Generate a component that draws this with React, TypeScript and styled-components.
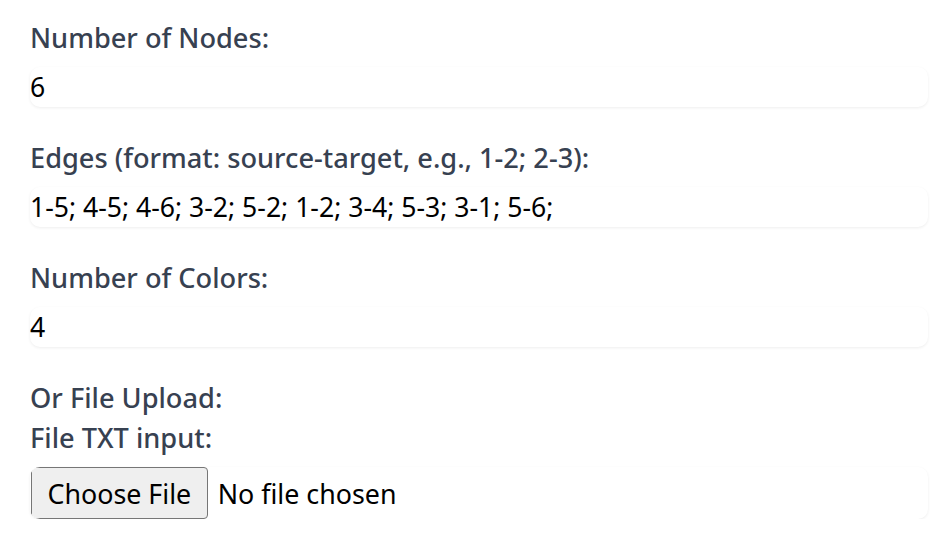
import React from "react";
import styled, { createGlobalStyle } from "styled-components";

const Global = createGlobalStyle`
  html, body { margin: 0; padding: 0; background: #ffffff; }
  body { font-family: "Noto Sans", "Open Sans", sans-serif; }
`;

const Form = styled.form`
  display: flex;
  flex-direction: column;
  padding: 20px 20px 0 30px;
`;

const Group = styled.div<{ $gap?: number }>`
  display: flex;
  flex-direction: column;
  margin-bottom: ${(p) => p.$gap ?? 33}px;
`;

const Label = styled.label<{ $mb?: number }>`
  display: block;
  font-family: "Noto Sans", sans-serif;
  font-weight: 500;
  font-size: 27.2px;
  line-height: 36px;
  color: #374151;
  margin-bottom: ${(p) => p.$mb ?? 11}px;
`;

const TextInput = styled.input`
  box-sizing: border-box;
  width: 100%;
  height: 40px;
  border: none;
  outline: none;
  border-radius: 10px;
  background: #ffffff;
  box-shadow: 0 1px 3px rgba(0, 0, 0, 0.07);
  padding: 0;
  font-family: "Noto Sans", sans-serif;
  font-size: 26.6px;
  color: #000;
`;

const FileInput = styled.input`
  box-sizing: border-box;
  width: 100%;
  height: 52px;
  border-radius: 10px;
  background: #ffffff;
  box-shadow: 0 1px 3px rgba(0, 0, 0, 0.07);
  font-family: "Noto Sans", sans-serif;
  font-size: 26.8px;
  color: #000;
  padding: 0 0 0 1px;

  &::file-selector-button {
    height: 52px;
    font-family: "Noto Sans", sans-serif;
    font-size: 26.8px;
    color: #000;
    background: #efefef;
    border: 1px solid #767676;
    border-radius: 4px;
    padding: 0 15.5px;
    margin-right: 10px;
  }
`;

export default function App() {
  return (
    <>
      <Global />
      <Form onSubmit={(e) => e.preventDefault()}>
        <Group>
          <Label htmlFor="nodes">Number of Nodes:</Label>
          <TextInput id="nodes" defaultValue="6" />
        </Group>
        <Group>
          <Label htmlFor="edges">Edges (format: source-target, e.g., 1-2; 2-3):</Label>
          <TextInput id="edges" defaultValue="1-5; 4-5; 4-6; 3-2; 5-2; 1-2; 3-4; 5-3; 3-1; 5-6;" />
        </Group>
        <Group>
          <Label htmlFor="colors">Number of Colors:</Label>
          <TextInput id="colors" defaultValue="4" />
        </Group>
        <Group $gap={0}>
          <Label $mb={4}>Or File Upload:</Label>
          <Label htmlFor="file">File TXT input:</Label>
          <FileInput id="file" type="file" accept=".txt" />
        </Group>
      </Form>
    </>
  );
}
